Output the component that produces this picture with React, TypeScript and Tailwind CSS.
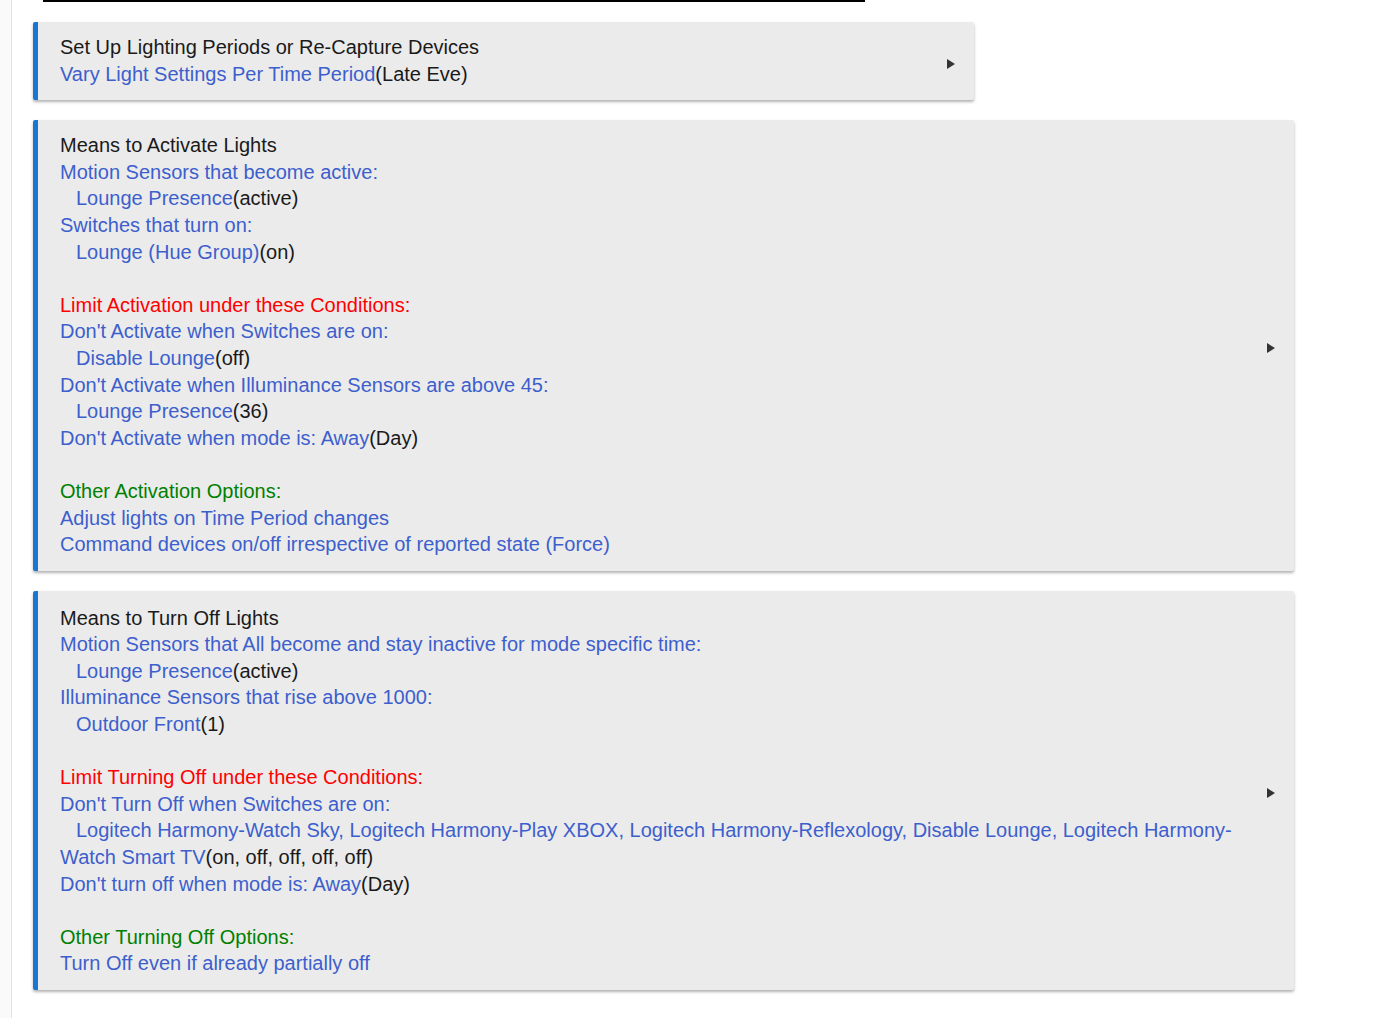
import React from "react";

const B = ({ children }: { children: React.ReactNode }) => (
  <span className="text-[#3d5fcd]">{children}</span>
);
const K = ({ children }: { children: React.ReactNode }) => (
  <span className="text-[#1a1a1a]">{children}</span>
);
const Line = ({ children, indent }: { children?: React.ReactNode; indent?: boolean }) => (
  <div className="min-h-[26.6px]">
    {indent ? <span className="ml-[16px]" /> : null}
    {children}
  </div>
);

const Arrow = () => (
  <svg width="10" height="12" viewBox="0 0 10 12" className="shrink-0 mt-[7px]">
    <path d="M1 1 L9 6 L1 11 Z" fill="#333" />
  </svg>
);

const Card = ({ w, children }: { w: string; children: React.ReactNode }) => (
  <div
    className={`${w} flex items-center bg-[#ebebeb] border-l-[5px] border-[#1976d2] rounded-[2px] shadow-[0_2px_3px_rgba(0,0,0,0.3)] pl-[22px] pr-[18px] pt-[12px] pb-[13px]`}
  >
    <div className="flex-1 min-w-0 text-[20px] leading-[26.6px]">{children}</div>
    <Arrow />
  </div>
);

export default function App() {
  return (
    <div
      className="flex min-h-[1018px] bg-white"
      style={{ fontFamily: '"Liberation Sans", Arial, sans-serif' }}
    >
      <div className="w-[12px] shrink-0 bg-[#fafafa] border-r border-[#e3e3e3]" />
      <div className="flex-1 pl-[21px]">
        <div className="ml-[10px] w-[822px] h-[2px] bg-black" />
        <div className="flex flex-col gap-[20px] pt-[20px]">
          <Card w="w-[941px]">
            <Line><K>Set Up Lighting Periods or Re-Capture Devices</K></Line>
            <Line><B>Vary Light Settings Per Time Period</B><K>(Late Eve)</K></Line>
          </Card>
          <Card w="w-[1261px]">
            <Line><K>Means to Activate Lights</K></Line>
            <Line><B>Motion Sensors that become active:</B></Line>
            <Line indent><B>Lounge Presence</B><K>(active)</K></Line>
            <Line><B>Switches that turn on:</B></Line>
            <Line indent><B>Lounge (Hue Group)</B><K>(on)</K></Line>
            <Line />
            <Line><span className="text-[#ff0000]">Limit Activation under these Conditions:</span></Line>
            <Line><B>Don't Activate when Switches are on:</B></Line>
            <Line indent><B>Disable Lounge</B><K>(off)</K></Line>
            <Line><B>Don't Activate when Illuminance Sensors are above 45:</B></Line>
            <Line indent><B>Lounge Presence</B><K>(36)</K></Line>
            <Line><B>Don't Activate when mode is: Away</B><K>(Day)</K></Line>
            <Line />
            <Line><span className="text-[#008000]">Other Activation Options:</span></Line>
            <Line><B>Adjust lights on Time Period changes</B></Line>
            <Line><B>Command devices on/off irrespective of reported state (Force)</B></Line>
          </Card>
          <Card w="w-[1261px]">
            <div className="pt-[2px]" />
            <Line><K>Means to Turn Off Lights</K></Line>
            <Line><B>Motion Sensors that All become and stay inactive for mode specific time:</B></Line>
            <Line indent><B>Lounge Presence</B><K>(active)</K></Line>
            <Line><B>Illuminance Sensors that rise above 1000:</B></Line>
            <Line indent><B>Outdoor Front</B><K>(1)</K></Line>
            <Line />
            <Line><span className="text-[#ff0000]">Limit Turning Off under these Conditions:</span></Line>
            <Line><B>Don't Turn Off when Switches are on:</B></Line>
            <Line indent>
              <B>Logitech Harmony-Watch Sky, Logitech Harmony-Play XBOX, Logitech Harmony-Reflexology, Disable Lounge, Logitech Harmony-Watch Smart TV</B>
              <K>(on, off, off, off, off)</K>
            </Line>
            <Line><B>Don't turn off when mode is: Away</B><K>(Day)</K></Line>
            <Line />
            <Line><span className="text-[#008000]">Other Turning Off Options:</span></Line>
            <Line><B>Turn Off even if already partially off</B></Line>
          </Card>
        </div>
      </div>
    </div>
  );
}
